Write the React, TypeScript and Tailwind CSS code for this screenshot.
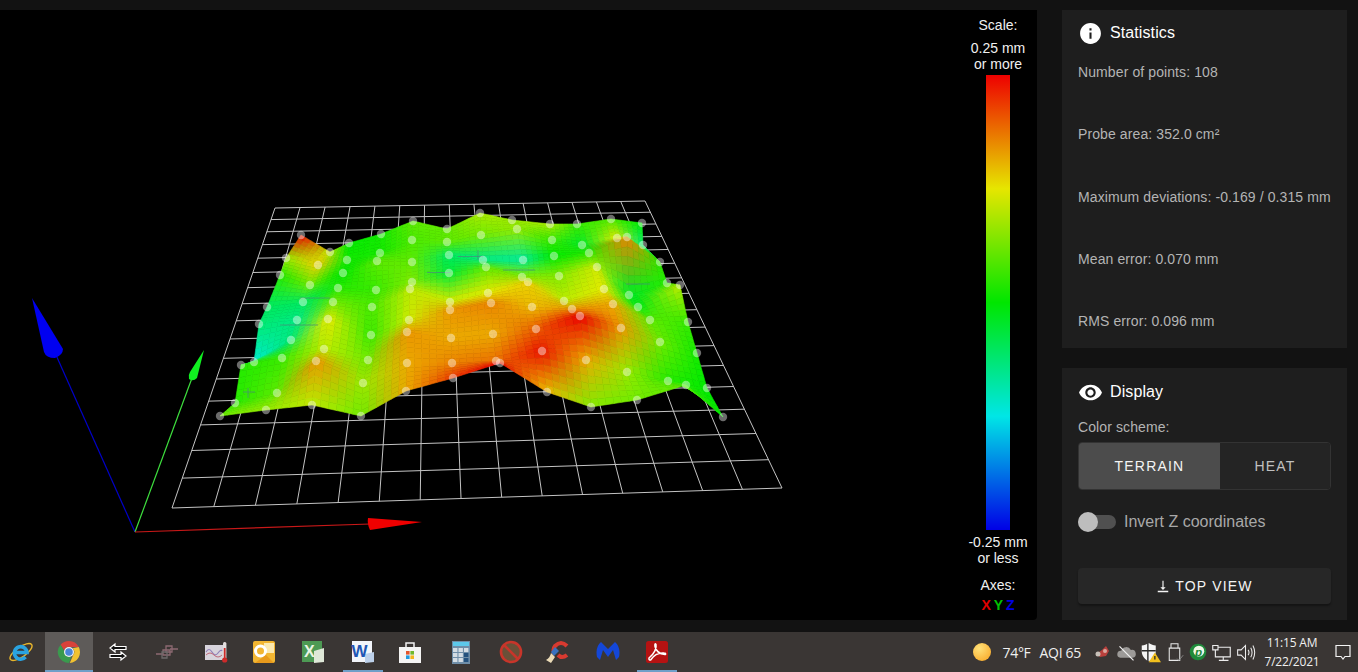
import React from "react";
import { MdInfo, MdVisibility } from "react-icons/md";

// probe points, front row first: x, y, z (mm)
const P: [number, number, number][][] = [
  [[220,416,.06],[266,410,.08],[312,405,.1],[361,416,.06],[406,391,.16],[453,378,.22],[500,363,.26],[547,392,.15],[591,407,.07],[637,400,.06],[686,385,.05],[723,417,0]],
  [[235,403,.02],[277,393,.05],[316,361,.17],[363,383,.08],[407,363,.16],[452,363,.18],[496,361,.19],[542,351,.24],[586,360,.16],[627,372,.08],[668,381,.02],[707,388,0]],
  [[241,365,.02],[282,358,.03],[324,349,.1],[368,360,.06],[407,332,.17],[451,338,.16],[493,334,.16],[536,329,.2],[580,316,.28],[621,328,.17],[660,342,.06],[697,353,.01]],
  [[254,362,-.11],[291,340,-.06],[328,319,.12],[371,335,.03],[409,320,.11],[450,310,.17],[491,303,.18],[532,307,.15],[572,309,.17],[613,304,.16],[650,320,.05],[688,322,.03]],
  [[259,324,-.06],[297,320,-.07],[333,302,.06],[372,307,.04],[410,289,.1],[450,302,.11],[488,293,.12],[528,282,.14],[564,301,.1],[604,289,.12],[638,307,-.01],[680,285,.1]],
  [[267,307,-.05],[303,302,-.05],[338,288,.02],[376,290,.03],[412,282,.07],[449,273,-.03],[486,267,.05],[522,277,.07],[559,276,.07],[597,267,.11],[629,295,-.02],[667,283,.02]],
  [[280,275,.02],[310,285,.06],[343,273,0],[377,261,.05],[412,262,.05],[449,255,-.05],[483,260,-.07],[523,260,-.08],[554,256,0],[589,253,.02],[627,237,.18],[660,262,.02]],
  [[286,258,.08],[318,265,.14],[347,260,.01],[380,253,.01],[412,240,.04],[447,242,.05],[481,235,.06],[517,229,.08],[552,240,.03],[582,245,-.02],[617,238,.12],[643,245,-.06]],
  [[301,235,.3],[330,252,.1],[349,243,0],[381,234,.01],[413,221,.05],[447,229,.05],[480,213,.09],[512,220,.08],[550,224,.09],[577,224,.03],[611,219,.04],[642,223,0]],
];

const STOPS = [[235,0,0],[235,235,0],[0,235,0],[0,235,235],[0,0,235]];

function terrain(z: number) {
  const t = Math.min(0.999, Math.max(0, (0.25 - z) / 0.5)) * 4;
  const i = Math.floor(t);
  const f = t - i;
  return STOPS[i].map((c, k) => c + (STOPS[i + 1][k] - c) * f);
}

const lerp = (a: number, b: number, t: number) => a + (b - a) * t;

// bilinear patches, painted back to front so the folds cover what is behind
function buildSurface() {
  const N = 6;
  const out: { pts: string; fill: string }[] = [];
  for (let j = P.length - 2; j >= 0; j--) {
    for (let i = 0; i < 11; i++) {
      const a = P[j + 1][i], b = P[j + 1][i + 1], c = P[j][i + 1], d = P[j][i];
      const ca = terrain(a[2]), cb = terrain(b[2]), cc = terrain(c[2]), cd = terrain(d[2]);
      const at = (s: number, t: number) => {
        const x = lerp(lerp(a[0], b[0], s), lerp(d[0], c[0], s), t);
        const y = lerp(lerp(a[1], b[1], s), lerp(d[1], c[1], s), t);
        return `${x.toFixed(1)},${y.toFixed(1)}`;
      };
      for (let v = 0; v < N; v++) {
        for (let u = 0; u < N; u++) {
          const s = (u + 0.5) / N, t = (v + 0.5) / N;
          const rgb = [0, 1, 2].map((k) => Math.round(lerp(lerp(ca[k], cb[k], s), lerp(cd[k], cc[k], s), t)));
          out.push({
            pts: [at(u / N, v / N), at((u + 1) / N, v / N), at((u + 1) / N, (v + 1) / N), at(u / N, (v + 1) / N)].join(" "),
            fill: `rgb(${rgb.join(",")})`,
          });
        }
      }
    }
  }
  return out;
}

// plate outline on screen -> perspective grid
function buildGrid() {
  const [x0, y0, x1, y1, x2, y2, x3, y3] = [172, 508, 782, 488, 645, 201, 275, 208];
  const dx1 = x1 - x2, dx2 = x3 - x2, sx = x0 - x1 + x2 - x3;
  const dy1 = y1 - y2, dy2 = y3 - y2, sy = y0 - y1 + y2 - y3;
  const den = dx1 * dy2 - dx2 * dy1;
  const g = (sx * dy2 - dx2 * sy) / den, h = (dx1 * sy - sx * dy1) / den;
  const a = x1 - x0 + g * x1, b = x3 - x0 + h * x3, d = y1 - y0 + g * y1, e = y3 - y0 + h * y3;
  const pr = (u: number, v: number) => {
    const w = g * u + h * v + 1;
    return [(a * u + b * v + x0) / w, (d * u + e * v + y0) / w];
  };
  const lines: number[][] = [];
  for (let i = 0; i <= 15; i++) lines.push([...pr(i / 15, 0), ...pr(i / 15, 1)]);
  for (let j = 0; j <= 16; j++) lines.push([...pr(0, j / 16), ...pr(1, j / 16)]);
  return lines;
}

const surface = buildSurface();
const grid = buildGrid();

const HeightMap = () => (
  <svg viewBox="0 10 959 610" className="w-[959px] h-[610px] shrink-0">
    {grid.map((l, i) => (
      <line key={i} x1={l[0]} y1={l[1]} x2={l[2]} y2={l[3]} stroke="#c4c4c4" strokeWidth="1" />
    ))}
    {surface.map((q, i) => (
      <polygon key={i} points={q.pts} fill={q.fill} stroke={q.fill} strokeWidth="0.6" />
    ))}
    <path
      d="M427 272.5H450M458 256.5H483M478 250V260M243 392H255M248 388V398M503 270H535M626 284H650M300 298H330M280 325H318"
      fill="none"
      stroke="#4a8a7a"
      strokeOpacity="0.7"
      strokeWidth="1"
    />
    {P.flat().map((p, i) => (
      <circle key={i} cx={p[0]} cy={p[1]} r="4.2" fill="#fff" fillOpacity="0.42" />
    ))}
    {/* axes */}
    <line x1="135" y1="532" x2="56" y2="355" stroke="#0000c8" strokeWidth="1.2" />
    <path d="M32 298L63 349Q63 355 55 358Q46 358 44 352Z" fill="#0000f0" />
    <line x1="135" y1="532" x2="192" y2="378" stroke="#3ee03e" strokeWidth="1.2" />
    <path d="M204 350L197 378Q193 382 189 379Q188 375 190 372Z" fill="#10f020" />
    <line x1="135" y1="532" x2="370" y2="524" stroke="#c81818" strokeWidth="1.2" />
    <path d="M422 522L370 530Q367 524 368 518Z" fill="#f00000" />
  </svg>
);

const Legend = () => (
  <div className="w-[78px] flex flex-col items-center text-[14px] leading-4 text-[#f0f0f0]">
    <div className="mt-[7px]">Scale:</div>
    <div className="mt-[7px] text-center">0.25 mm<br />or more</div>
    <div className="mt-[3px] w-6 h-[455px] bg-[linear-gradient(to_bottom,#ee0000,#e6e600,#00e600,#00e6e6,#0000e6)]" />
    <div className="mt-1 text-center">-0.25 mm<br />or less</div>
    <div className="mt-[11px]">Axes:</div>
    <div className="mt-1 font-bold flex gap-[3px]">
      <span className="text-[#e00000]">X</span>
      <span className="text-[#00c000]">Y</span>
      <span className="text-[#0000e0]">Z</span>
    </div>
  </div>
);

const stats = [
  "Number of points: 108",
  "Probe area: 352.0 cm²",
  "Maximum deviations: -0.169 / 0.315 mm",
  "Mean error: 0.070 mm",
  "RMS error: 0.096 mm",
];

const Statistics = () => (
  <section className="h-[338px] bg-[#1e1e1e] px-4 pt-[11px]">
    <h3 className="flex items-center gap-[7px] h-6 text-[16px] tracking-[0.1px] text-white">
      <MdInfo size={25} /> Statistics
    </h3>
    <div className="mt-[19px] flex flex-col gap-[46.25px] text-[14px] leading-4 tracking-[0.1px] text-[#b4b4b4]">
      {stats.map((s) => (
        <div key={s}>{s}</div>
      ))}
    </div>
  </section>
);

const Display = () => (
  <section className="h-[252px] bg-[#1e1e1e] px-4 pt-[12px]">
    <h3 className="flex items-center gap-[7px] h-6 text-[16px] tracking-[0.1px] text-white">
      <MdVisibility size={25} /> Display
    </h3>
    <div className="mt-[15px] text-[14px] leading-4 tracking-[0.1px] text-[#b4b4b4]">Color scheme:</div>
    <div className="mt-[7px] h-12 flex rounded border border-[#333333] overflow-hidden text-[14px] font-medium tracking-[1.2px]">
      <div className="w-[141px] bg-[#4c4c4c] text-[#f4f4f4] flex items-center justify-center">TERRAIN</div>
      <div className="flex-1 bg-[#242424] text-[#c0c0c0] flex items-center justify-center">HEAT</div>
    </div>
    <div className="mt-[22px] h-5 flex items-center gap-2">
      <div className="relative w-[38px] h-[14px] rounded-full bg-[#505050]">
        <div className="absolute left-0 -top-[3px] w-5 h-5 rounded-full bg-[#bdbdbd]" />
      </div>
      <span className="text-[16px] text-[#a8a8a8]">Invert Z coordinates</span>
    </div>
    <button className="mt-[36px] w-full h-9 rounded bg-[#272727] text-[14px] font-medium tracking-[1.2px] text-[#f4f4f4] flex items-center justify-center gap-[5px] shadow-[0_2px_2px_rgba(0,0,0,.35)]">
      <svg viewBox="0 0 24 24" className="w-[14px] h-[14px] fill-current">
        <path d="M11 3h2v11h3.5L12 19l-4.5-5H11zM3 20h18v2.5H3z" />
      </svg>
      TOP VIEW
    </button>
  </section>
);

/* taskbar glyphs, all on a 24 box */
const Ico = ({ children }: { children: React.ReactNode }) => (
  <svg viewBox="0 0 24 24" className="w-6 h-6">{children}</svg>
);

const apps: { w: number; ml?: number; active?: boolean; running?: boolean; icon: React.ReactNode }[] = [
  { w: 45, icon: (
    <Ico>
      <ellipse cx="12" cy="12" rx="13" ry="5" fill="none" stroke="#e8b62c" strokeWidth="1.4" transform="rotate(-35 12 12)" />
      <path d="M5.5 12.5H18A6.3 6.3 0 1 0 16.5 17" fill="none" stroke="#2aa3e0" strokeWidth="3.6" />
    </Ico>
  ) },
  { w: 48, active: true, running: true, icon: (
    <Ico>
      <path d="M12 1A11 11 0 0 1 21.8 7H12A5 5 0 0 0 7.3 10.4L3.6 4.7A11 11 0 0 1 12 1Z" fill="#d8423a" />
      <path d="M21.8 7A11 11 0 0 1 12.8 23L16.4 14.6A5 5 0 0 0 15.6 8.2Z" fill="#f2c230" />
      <path d="M3.6 4.7L8.4 13.2A5 5 0 0 0 14.4 16.6L12 23A11 11 0 0 1 3.6 4.7Z" fill="#3a9a4e" />
      <circle cx="12" cy="12" r="5" fill="#f2f2f2" />
      <circle cx="12" cy="12" r="3.8" fill="#4a86d8" />
    </Ico>
  ) },
  { w: 50, icon: (
    <Ico>
      <path d="M9 4L4 8L9 12V9.5H20V6.5H9Z" fill="#111" stroke="#fff" strokeWidth="1.2" />
      <path d="M15 12L20 16L15 20V17.5H4V14.5H15Z" fill="#111" stroke="#fff" strokeWidth="1.2" />
    </Ico>
  ) },
  { w: 48, icon: (
    <Ico>
      <path d="M1 14H8M15 9H23M8 10H15V15H8ZM11 6H17V12H11Z" fill="none" stroke="#8d6a72" strokeWidth="1.3" />
      <path d="M7 12H12V18H7Z" fill="none" stroke="#6e6a6a" strokeWidth="1.3" />
    </Ico>
  ) },
  { w: 50, icon: (
    <Ico>
      <rect x="1" y="5" width="18" height="15" fill="#d8d4dc" />
      <path d="M2 12Q5 7 8 12T14 13T18 11" fill="none" stroke="#8f7fb8" strokeWidth="1.2" />
      <path d="M2 15Q6 11 10 15T18 15" fill="none" stroke="#c06a7a" strokeWidth="1" />
      <rect x="19" y="2" width="3.4" height="17" rx="1.5" fill="#e4e0e0" />
      <rect x="19.8" y="8" width="1.8" height="12" fill="#cc2a2a" />
      <circle cx="20.7" cy="20" r="2.6" fill="#cc2a2a" />
    </Ico>
  ) },
  { w: 46, icon: (
    <Ico>
      <rect x="1" y="1" width="22" height="22" rx="2" fill="#f2b632" />
      <rect x="12" y="3" width="10" height="10" fill="#fbe9b0" />
      <circle cx="8.5" cy="11" r="5" fill="none" stroke="#fff" strokeWidth="3" />
      <path d="M3 23L14 15L22 23Z" fill="#e89a1c" />
    </Ico>
  ) },
  { w: 52, icon: (
    <Ico>
      <rect x="1" y="1" width="20" height="21" fill="#4d9a54" />
      <path d="M13 11L23 8V22L13 23Z" fill="#dfe8d8" />
      <text x="3" y="17" fontSize="16" fontWeight="700" fontFamily="Liberation Sans" fill="#eaf5e4">X</text>
    </Ico>
  ) },
  { w: 40, ml: 4, running: true, icon: (
    <Ico>
      <rect x="1" y="1" width="20" height="21" fill="#f2f5fa" />
      <path d="M14 14L23 12V22L14 23Z" fill="#bcd0ea" />
      <text x="0.5" y="17" fontSize="17" fontWeight="700" fontFamily="Liberation Sans" fill="#1f56b4">W</text>
    </Ico>
  ) },
  { w: 54, icon: (
    <Ico>
      <path d="M8 7V3H16V7" fill="none" stroke="#f2f2f2" strokeWidth="1.5" />
      <rect x="1" y="7" width="22" height="16" fill="#f4f4f4" />
      <rect x="8" y="11" width="3.6" height="3.6" fill="#e2552c" />
      <rect x="12.4" y="11" width="3.6" height="3.6" fill="#70b82e" />
      <rect x="8" y="15.4" width="3.6" height="3.6" fill="#1e9ae0" />
      <rect x="12.4" y="15.4" width="3.6" height="3.6" fill="#f2b61e" />
    </Ico>
  ) },
  { w: 48, icon: (
    <Ico>
      <rect x="3" y="1" width="18" height="23" fill="#6f8ea8" />
      <rect x="4" y="2" width="16" height="4" fill="#5cc8ea" />
      {[8, 13, 18].map((y) =>
        [4, 9.5, 15].map((x) => (
          <rect key={`${x}-${y}`} x={x} y={y} width="4.4" height="4" fill={x === 15 && y > 8 ? "#24527e" : "#d4dde4"} />
        ))
      )}
    </Ico>
  ) },
  { w: 52, icon: (
    <Ico>
      <circle cx="12" cy="12" r="10" fill="#6a5038" stroke="#c8352a" strokeWidth="2.6" />
      <path d="M5 5L19 19" stroke="#c8352a" strokeWidth="2.6" />
    </Ico>
  ) },
  { w: 42, icon: (
    <Ico>
      <path d="M21 6Q15 0 9 6Q6 10 9 14" fill="none" stroke="#d83a30" strokeWidth="4" />
      <path d="M12 15Q16 19 21 15" fill="none" stroke="#d83a30" strokeWidth="4" />
      <path d="M9 7L13 11L8 16L5 12Z" fill="#3a72c0" />
      <path d="M5 13L9 17L5 23L0 20Q4 18 5 13Z" fill="#ecdcb8" />
    </Ico>
  ) },
  { w: 58, icon: (
    <Ico>
      <path d="M1 17Q-1 7 5 2L12 9L19 2Q25 7 23 17L20 20L17 10L12 17L7 10L4 20Z" fill="#1447d8" />
    </Ico>
  ) },
  { w: 40, running: true, icon: (
    <Ico>
      <rect x="1" y="1" width="22" height="22" rx="2.5" fill="#b51212" />
      <path d="M4 18C9 14 12 8 11 4.5C10.5 3 9.5 4 10 6.5C11 11 15 14 20 14.5C21 14.5 21 13 19 13C14 12.5 9 15 6 19.5C5 21 3.5 19.5 4 18Z" fill="none" stroke="#fff" strokeWidth="1.5" />
    </Ico>
  ) },
];

const Taskbar = () => (
  <footer className="mt-3 h-10 bg-[#3a3634] flex items-stretch font-['Open_Sans',sans-serif] text-[#f0f0f0]">
    {apps.map((a, i) => (
      <div
        key={i}
        className={`relative shrink-0 flex items-center justify-center first:pr-1 ${a.active ? "bg-[#5e5b59]" : ""}`}
        style={{ width: a.w, marginLeft: a.ml }}
      >
        {a.icon}
        {a.running && <div className="absolute bottom-0 inset-x-0 h-[2px] bg-[#6f9fc8]" />}
      </div>
    ))}
    <div className="flex-1" />
    <div className="flex items-center text-[14px]">
      <div className="w-[18px] h-[18px] rounded-full bg-[radial-gradient(circle_at_35%_30%,#ffe27a,#f8a21e)]" />
      <span className="ml-[11px] tracking-[-0.3px]">74°F</span>
      <span className="ml-[9px] tracking-[-0.3px]">AQI 65</span>
      <div className="ml-[12px] flex items-center gap-[3px]">
        <svg viewBox="0 0 20 20" className="w-5 h-5">
          <path d="M3 12L9 8L13 4L16 9L13 14L7 15Z" fill="#b8403c" />
          <circle cx="5" cy="12" r="2.5" fill="#c8c0b8" />
          <circle cx="12" cy="9" r="2" fill="#d8a8a0" />
        </svg>
        <svg viewBox="0 0 24 24" className="w-[21px] h-[21px]">
          <path d="M5 18A4 4 0 0 1 6 10A6 6 0 0 1 17 9A4.5 4.5 0 0 1 19 18Z" fill="#9c9a98" />
          <path d="M4 5L20 21" stroke="#f0f0f0" strokeWidth="1.4" />
        </svg>
        <svg viewBox="0 0 24 24" className="w-[21px] h-[21px]">
          <path d="M10 1C7 3 5 3.5 2 4V11C2 16 6 20 10 22C14 20 18 16 18 11V4C15 3.5 13 3 10 1Z" fill="#f4f4f4" />
          <path d="M9 1V22M2 10H18" stroke="#2c2c2c" strokeWidth="1.6" />
          <path d="M17 12L24 23H10Z" fill="#f2c01e" />
          <rect x="16.3" y="16" width="1.4" height="4" fill="#222" />
        </svg>
        <svg viewBox="0 0 24 24" className="w-[21px] h-[21px]">
          <path d="M8 2H16V7H18V21H6V7H8ZM6 7H18" fill="none" stroke="#e8e8e8" strokeWidth="1.2" />
          <path d="M15 19L17 21L22 15" fill="none" stroke="#8a8a8a" strokeWidth="1" />
        </svg>
        <svg viewBox="0 0 24 24" className="w-5 h-5">
          <circle cx="12" cy="12" r="10" fill="#1f8a3a" />
          <circle cx="13" cy="11" r="6.5" fill="#f0f8e8" />
          <text x="8.4" y="16.5" fontSize="14" fontWeight="700" fontStyle="italic" fontFamily="Liberation Sans" fill="#1f8a3a">p</text>
        </svg>
        <svg viewBox="0 0 24 24" className="w-[21px] h-[21px]">
          <path d="M2 4H8V9H2ZM8 6H22V17H8M5 9V17H8M14 17V21M9 21H20" fill="none" stroke="#ececec" strokeWidth="1.3" />
        </svg>
        <svg viewBox="0 0 24 24" className="w-[21px] h-[21px]">
          <path d="M3 9H7L12 4V20L7 15H3ZM15 9Q17 12 15 15M18 6.5Q21 12 18 17.5M20.5 4Q24.5 12 20.5 20" fill="none" stroke="#ececec" strokeWidth="1.2" />
        </svg>
      </div>
      <div className="ml-[0px] w-[72px] flex flex-col items-center text-[12px] leading-[19px] tracking-[-0.2px]">
        <span>11:15 AM</span>
        <span>7/22/2021</span>
      </div>
      <svg viewBox="0 0 20 20" className="ml-[5px] mr-[5px] w-5 h-5">
        <path d="M3 3.5H17V14.5H12L10 17L8 14.5H3Z" fill="none" stroke="#f4f4f4" strokeWidth="1.2" />
      </svg>
    </div>
  </footer>
);

export default function App() {
  return (
    <div className="w-[1358px] h-[672px] overflow-hidden bg-[#121212] pt-[10px] font-['Liberation_Sans',Arial,sans-serif]">
      <main className="flex h-[610px]">
        <div className="w-[1037px] h-full bg-black rounded-br flex">
          <HeightMap />
          <Legend />
        </div>
        <aside className="ml-[25px] w-[285px] flex flex-col gap-5">
          <Statistics />
          <Display />
        </aside>
      </main>
      <Taskbar />
    </div>
  );
}
